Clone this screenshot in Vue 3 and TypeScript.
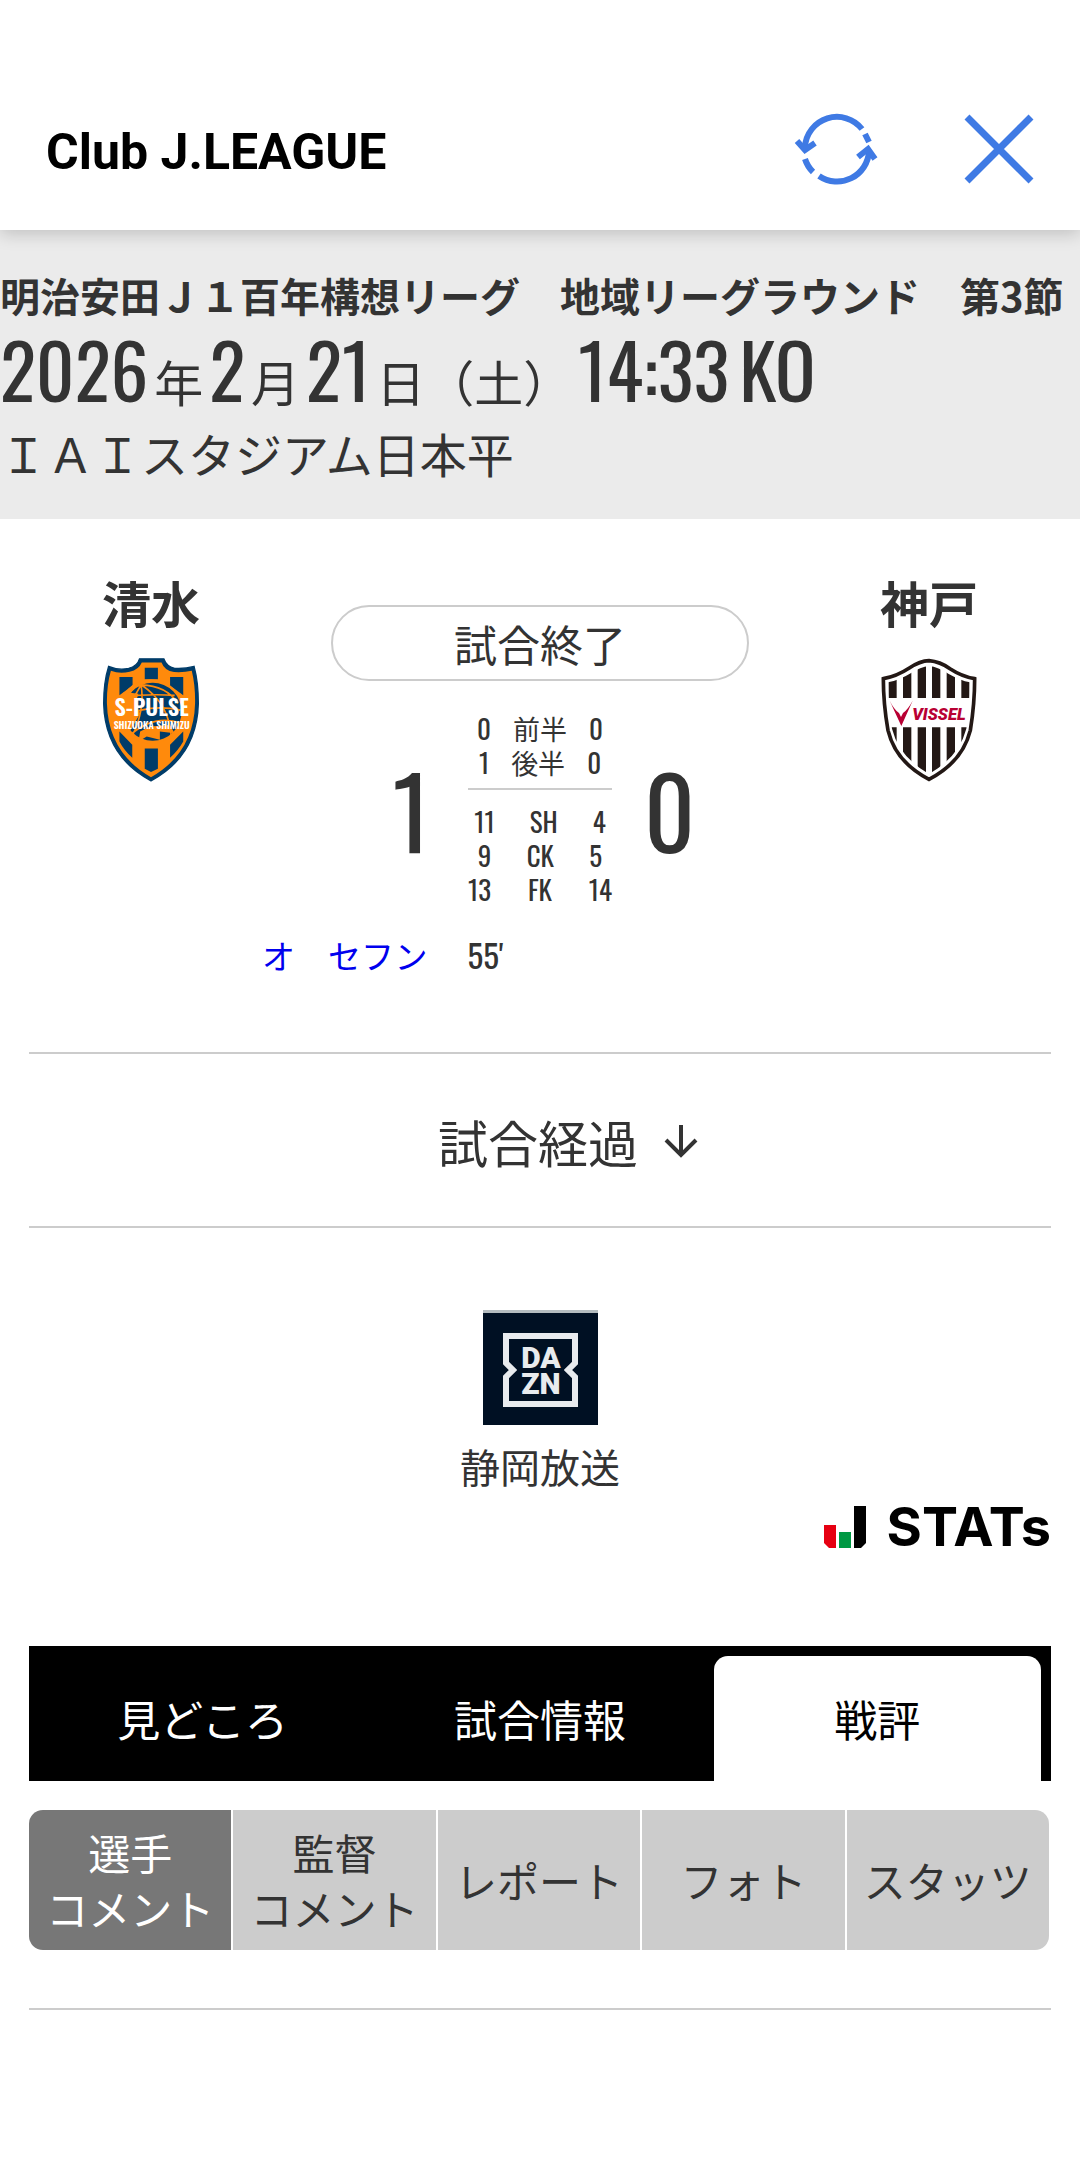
<script setup lang="ts">
interface StatRow {
  label: string
  home: number
  away: number
}

const halves: StatRow[] = [
  { label: '前半', home: 0, away: 0 },
  { label: '後半', home: 1, away: 0 },
]

const stats: StatRow[] = [
  { label: 'SH', home: 11, away: 4 },
  { label: 'CK', home: 9, away: 5 },
  { label: 'FK', home: 13, away: 14 },
]

const tabs: { label: string; active: boolean }[] = [
  { label: '見どころ', active: false },
  { label: '試合情報', active: false },
  { label: '戦評', active: true },
]

const subTabs: { lines: string[]; active: boolean }[] = [
  { lines: ['選手', 'コメント'], active: true },
  { lines: ['監督', 'コメント'], active: false },
  { lines: ['レポート'], active: false },
  { lines: ['フォト'], active: false },
  { lines: ['スタッツ'], active: false },
]
</script>

<template>
  <div class="page">
    <header class="app-bar">
      <h1 class="app-title">Club J.LEAGUE</h1>
      <button class="icon-button" type="button" aria-label="更新">
        <svg width="84" height="72" viewBox="0 0 84 72" fill="none" stroke="#3f7ae4" stroke-width="6">
          <path d="M11 34A32 32 0 0 1 68 16" />
          <path d="M71 21L75 29" />
          <path d="M75 38A32 32 0 0 1 25 63" />
          <path d="M11 46A32 32 0 0 0 19 59" />
          <path d="M3 28L11 37L21 30" />
          <path d="M64 44L74 36L81 46" />
        </svg>
      </button>
      <button class="icon-button" type="button" aria-label="閉じる">
        <svg width="70" height="70" viewBox="0 0 70 70" fill="none" stroke="#3f7ae4" stroke-width="7">
          <path d="M3 3L67 67M67 3L3 67" />
        </svg>
      </button>
    </header>

    <section class="match-info">
      <p class="league">明治安田Ｊ１百年構想リーグ　地域リーグラウンド　第3節</p>
      <p class="kickoff">
        <span class="num">2026</span><span class="unit">年</span><span class="num">2</span
        ><span class="unit">月</span><span class="num">21</span><span class="unit">日（土）</span
        ><span class="num">14:33</span><span class="num">KO</span>
      </p>
      <p class="venue">ＩＡＩスタジアム日本平</p>
    </section>

    <main class="content">
      <section class="match">
        <div class="team">
          <h2 class="team-name">清水</h2>
          <svg class="crest" width="98" height="126" viewBox="124 290 298 380" role="img" aria-label="清水エスパルス">
            <path d="M238 294H312Q320 318 345 323Q375 325 404 317Q417 365 417 430Q413 590 273 665Q133 590 129 430Q129 365 144 317Q175 330 205 323Q232 316 238 294Z" fill="#003c69" stroke="#003c69" stroke-width="4" />
            <path d="M245 305H305Q314 330 343 334Q372 336 397 330Q408 375 407 430Q403 580 273 654Q143 580 139 430Q138 375 151 330Q178 341 208 333Q236 327 245 305Z" fill="#ff8a0c" />
            <path d="M254 321H294V356H254ZM254 567H294V628L273 638L254 628ZM177 349H217V375L177 405ZM331 349H371V405L331 375ZM177 515L216 555V595Q190 570 177 545ZM371 515L331 555V595Q357 570 371 545Z" fill="#003c69" />
            <circle cx="273" cy="454" r="98" fill="#ff8a0c" />
            <circle cx="278" cy="455" r="88" fill="#003c69" />
            <g fill="none" stroke="#ff8a0c" stroke-width="5">
              <path d="M243 373Q205 430 205 500M243 373Q255 450 215 530M243 373Q330 430 335 535M243 373Q320 375 355 430M243 373Q220 375 205 405M188 410Q260 400 345 405M185 470Q270 430 362 450M205 530Q280 460 365 490" />
            </g>
            <path d="M190 395L235 400L225 430L240 460L205 520L185 470ZM270 500L330 495L345 520L300 515L300 540L260 530L235 545L240 515Z" fill="#ff8a0c" />
            <text class="crest-text" x="275" y="467" font-size="68">S-PULSE</text>
            <text class="crest-text" x="275" y="507" font-size="30">SHIZUOKA SHIMIZU</text>
          </svg>
        </div>

        <div class="result">
          <p class="status">試合終了</p>
          <div class="scoreboard">
            <p class="score home">1</p>
            <div class="breakdown">
              <table class="rows" aria-label="得点経過">
                <tbody>
                  <tr v-for="row in halves" :key="row.label">
                    <td>{{ row.home }}</td>
                    <th scope="row">{{ row.label }}</th>
                    <td>{{ row.away }}</td>
                  </tr>
                </tbody>
              </table>
              <table class="rows rows-stats" aria-label="スタッツ">
                <tbody>
                  <tr v-for="row in stats" :key="row.label">
                    <td>{{ row.home }}</td>
                    <th scope="row">{{ row.label }}</th>
                    <td>{{ row.away }}</td>
                  </tr>
                </tbody>
              </table>
            </div>
            <p class="score away">0</p>
          </div>
        </div>

        <div class="team">
          <h2 class="team-name">神戸</h2>
          <svg class="crest" width="98" height="126" viewBox="120 290 294 378" role="img" aria-label="ヴィッセル神戸">
            <defs>
              <clipPath id="vissel-shield">
                <path d="M267 317Q295 320 325 340Q360 360 390 366Q390 435 379 505Q357 590 267 641Q177 590 156 505Q144 435 144 366Q178 360 212 339Q242 319 267 317Z" />
              </clipPath>
            </defs>
            <path d="M267 301Q300 304 330 325Q365 348 404 355Q404 430 391 510Q367 605 267 657Q167 605 144 510Q130 430 130 355Q170 348 208 323Q240 302 267 301Z" fill="#fff" stroke="#231815" stroke-width="11" />
            <path d="M146 300H170V413H146ZM189 300H214V413H189ZM233 300H258V413H233ZM276 300H301V413H276ZM320 300H345V413H320ZM364 300H388V413H364ZM146 501H170V660H146ZM189 501H214V660H189ZM233 501H258V660H233ZM276 501H301V660H276ZM320 501H345V660H320ZM364 501H388V660H364Z" fill="#231815" clip-path="url(#vissel-shield)" />
            <path d="M149 421Q162 447 177 458L183 470L189 458Q204 447 218 421L184 497Z" fill="#b80033" />
            <text class="vissel-text" x="297" y="480">VISSEL</text>
          </svg>
        </div>
      </section>

      <div class="goals">
        <p class="scorer"><a href="#scorer">オ　セフン</a></p>
        <p class="minute">55'</p>
      </div>

      <a class="progress" href="#progress">
        <span class="progress-label">試合経過</span>
        <svg width="34" height="34" viewBox="0 0 34 34" fill="none" stroke="#333" stroke-width="4">
          <path d="M17 1V31M2 16L17 31L32 16" />
        </svg>
      </a>

      <section class="broadcast">
        <svg width="115" height="115" viewBox="0 0 115 115" role="img" aria-label="DAZN">
          <rect width="115" height="115" fill="#001023" />
          <rect width="115" height="3" fill="#b4bcbf" />
          <path d="M23 26H92V53L85 60L92 67V94H23V67L30 60L23 53Z" fill="none" stroke="#e8ebee" stroke-width="6" />
          <g class="dazn-text">
            <text x="58" y="58">DA</text>
            <text x="58" y="84">ZN</text>
          </g>
        </svg>
        <p class="station">静岡放送</p>
      </section>

      <div class="stats-logo">
        <svg width="44" height="44" viewBox="0 0 44 44" aria-hidden="true">
          <path d="M1 20H13V43H6L1 38Z" fill="#e60012" />
          <path d="M16 27H28V43H16Z" fill="#009944" />
          <path d="M31 1H43V38L38 43H31Z" fill="#000" />
        </svg>
        <span>STATs</span>
      </div>

      <nav class="tabs">
        <button v-for="tab in tabs" :key="tab.label" class="tab" :class="{ active: tab.active }" type="button">
          {{ tab.label }}
        </button>
      </nav>

      <nav class="sub-tabs">
        <button v-for="(tab, i) in subTabs" :key="i" class="sub-tab" :class="{ active: tab.active }" type="button">
          <span v-for="line in tab.lines" :key="line">{{ line }}</span>
        </button>
      </nav>

      <hr class="divider" />
    </main>
  </div>
</template>

<style>
body {
  background: #fff;
}
</style>

<style scoped>
.page {
  color: #333;
  font-family: 'Noto Sans CJK JP', sans-serif;
}

p,
h1,
h2 {
  margin: 0;
}

button {
  border: 0;
  padding: 0;
  background: none;
  font-family: inherit;
}

.app-bar {
  position: relative;
  display: flex;
  align-items: center;
  gap: 86px;
  padding: 80px 46px 12px;
  min-height: 138px;
  background: #fff;
  box-shadow: 0 4px 16px rgba(0, 0, 0, 0.18);
}

.app-title {
  flex: 1;
  padding-top: 6px;
  color: #000;
  font: 700 50px/60px Roboto, sans-serif;
}

.icon-button {
  display: flex;
}

.match-info {
  padding: 38px 0 35px;
  background: #ebebeb;
  white-space: nowrap;
}

.league {
  font-size: 40px;
  line-height: 54px;
  font-weight: 700;
}

.kickoff {
  display: flex;
  align-items: baseline;
  gap: 6px;
  padding-bottom: 6px;
}

.num {
  font-family: Oswald, sans-serif;
  font-size: 75px;
  line-height: 94px;
}

.num + .num {
  padding-left: 4px;
}

.unit {
  font-size: 49px;
  line-height: 54px;
}

.venue {
  font-size: 47px;
  line-height: 62px;
}

.content {
  padding: 0 29px;
}

.match {
  display: flex;
  padding-top: 50px;
}

.team {
  flex: 1;
  display: flex;
  flex-direction: column;
  align-items: center;
  gap: 22px;
}

.team-name {
  font-size: 49px;
  line-height: 66px;
  font-weight: 700;
}

.crest-text {
  fill: #fff;
  font-family: Oswald, sans-serif;
  font-weight: 600;
  text-anchor: middle;
}

.vissel-text {
  fill: #b80033;
  font: italic 900 50px Roboto, sans-serif;
  text-anchor: middle;
}

.result {
  width: 418px;
  padding: 36px 58px 0;
}

.status {
  border: 2px solid #ccc;
  border-radius: 38px;
  text-align: center;
  font-size: 43px;
  line-height: 72px;
}

.scoreboard {
  display: grid;
  grid-template-columns: 1fr 144px 1fr;
  align-items: center;
  padding-top: 30px;
}

.score {
  font-family: Oswald, sans-serif;
  font-size: 99px;
  line-height: 120px;
}

.home {
  padding-right: 38px;
  text-align: right;
}

.away {
  padding-left: 32px;
}

.rows {
  display: block;
  font-family: Oswald, 'Noto Sans CJK JP', sans-serif;
  font-size: 27px;
  line-height: 34px;
}

.rows tbody {
  display: block;
}

.rows tr {
  display: flex;
  justify-content: center;
}

.rows td,
.rows th {
  padding: 0;
  font-weight: 400;
}

.rows th {
  width: 98px;
}

.rows-stats {
  margin-top: 9px;
  padding-top: 14px;
  border-top: 2px solid #ccc;
}

.goals {
  display: flex;
  gap: 40px;
  padding: 25px 0 73px;
  font-size: 33px;
  line-height: 48px;
}

.scorer {
  width: 39%;
  text-align: right;
}

.scorer a {
  color: #00e;
  text-decoration: none;
}

.minute {
  font-family: Oswald, sans-serif;
}

.progress {
  display: flex;
  align-items: center;
  justify-content: center;
  gap: 26px;
  padding: 2px 0 0 56px;
  border: solid #ccc;
  border-width: 2px 0;
  color: #333;
  text-decoration: none;
}

.progress-label {
  font-size: 50px;
  line-height: 170px;
}

.broadcast {
  display: flex;
  flex-direction: column;
  align-items: center;
  gap: 14px;
  padding-top: 82px;
}

.dazn-text {
  fill: #e8ebee;
  font: 900 30px Roboto, sans-serif;
  text-anchor: middle;
}

.station {
  font-size: 40px;
  line-height: 54px;
}

.stats-logo {
  display: flex;
  align-items: center;
  justify-content: flex-end;
  gap: 20px;
  padding: 9px 0 94px;
  color: #000;
  font: 700 54px/50px Inter, sans-serif;
}

.tabs {
  display: flex;
  gap: 10px;
  padding: 10px 10px 0;
  background: #000;
}

.tab {
  flex: 1;
  border-radius: 14px 14px 0 0;
  color: #fff;
  font-size: 43px;
  line-height: 125px;
}

.tab.active {
  background: #fff;
  color: #000;
}

.sub-tabs {
  display: flex;
  gap: 2px;
  margin: 29px 2px 58px 0;
  border-radius: 14px;
  overflow: hidden;
}

.sub-tab {
  flex: 1;
  display: flex;
  flex-direction: column;
  align-items: center;
  justify-content: center;
  min-height: 140px;
  background: #ccc;
  color: #333;
  font-size: 42px;
  line-height: 56px;
}

.sub-tab.active {
  background: #777;
  color: #fff;
}

.divider {
  margin: 0;
  border: 0;
  border-top: 2px solid #ccc;
}
</style>
